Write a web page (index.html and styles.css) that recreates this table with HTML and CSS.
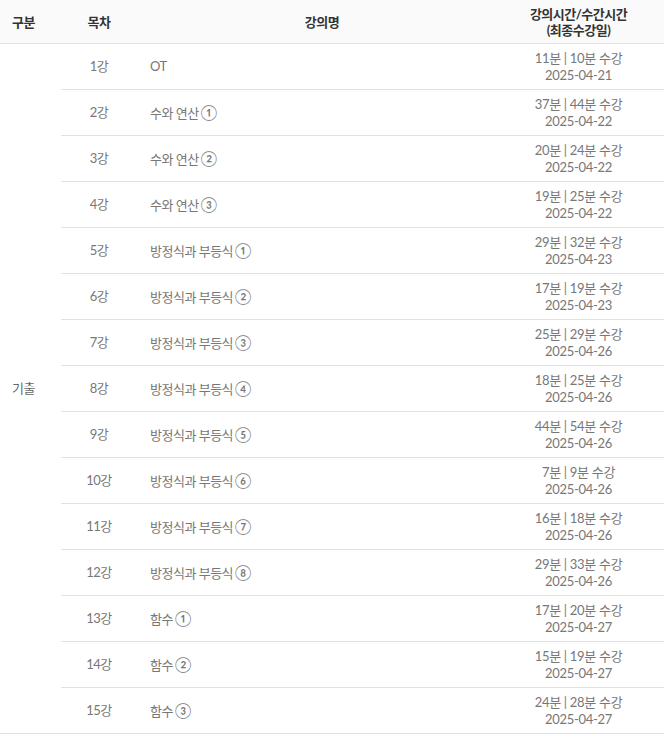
FILE: index.html
```html
<!DOCTYPE html>
<html lang="ko">
<head>
<meta charset="utf-8">
<title>강의 목차</title>
<link rel="stylesheet" href="styles.css">
</head>
<body>
<table class="lecture-table">
  <colgroup>
    <col class="c-cat">
    <col class="c-no">
    <col class="c-title">
    <col class="c-time">
  </colgroup>
  <thead>
    <tr>
      <th class="cat">구분</th>
      <th>목차</th>
      <th>강의명</th>
      <th class="time">강의시간/수간시간<br>(최종수강일)</th>
    </tr>
  </thead>
  <tbody>
    <tr><td class="cat" rowspan="15">기출</td><td class="no">1강</td><td class="title">OT</td><td class="time">11분 | 10분 수강<br>2025-04-21</td></tr>
    <tr><td class="no">2강</td><td class="title">수와 연산<span class="circ">①</span></td><td class="time">37분 | 44분 수강<br>2025-04-22</td></tr>
    <tr><td class="no">3강</td><td class="title">수와 연산<span class="circ">②</span></td><td class="time">20분 | 24분 수강<br>2025-04-22</td></tr>
    <tr><td class="no">4강</td><td class="title">수와 연산<span class="circ">③</span></td><td class="time">19분 | 25분 수강<br>2025-04-22</td></tr>
    <tr><td class="no">5강</td><td class="title">방정식과 부등식<span class="circ">①</span></td><td class="time">29분 | 32분 수강<br>2025-04-23</td></tr>
    <tr><td class="no">6강</td><td class="title">방정식과 부등식<span class="circ">②</span></td><td class="time">17분 | 19분 수강<br>2025-04-23</td></tr>
    <tr><td class="no">7강</td><td class="title">방정식과 부등식<span class="circ">③</span></td><td class="time">25분 | 29분 수강<br>2025-04-26</td></tr>
    <tr><td class="no">8강</td><td class="title">방정식과 부등식<span class="circ">④</span></td><td class="time">18분 | 25분 수강<br>2025-04-26</td></tr>
    <tr><td class="no">9강</td><td class="title">방정식과 부등식<span class="circ">⑤</span></td><td class="time">44분 | 54분 수강<br>2025-04-26</td></tr>
    <tr><td class="no">10강</td><td class="title">방정식과 부등식<span class="circ">⑥</span></td><td class="time">7분 | 9분 수강<br>2025-04-26</td></tr>
    <tr><td class="no">11강</td><td class="title">방정식과 부등식<span class="circ">⑦</span></td><td class="time">16분 | 18분 수강<br>2025-04-26</td></tr>
    <tr><td class="no">12강</td><td class="title">방정식과 부등식<span class="circ">⑧</span></td><td class="time">29분 | 33분 수강<br>2025-04-26</td></tr>
    <tr><td class="no">13강</td><td class="title">함수<span class="circ">①</span></td><td class="time">17분 | 20분 수강<br>2025-04-27</td></tr>
    <tr><td class="no">14강</td><td class="title">함수<span class="circ">②</span></td><td class="time">15분 | 19분 수강<br>2025-04-27</td></tr>
    <tr><td class="no">15강</td><td class="title">함수<span class="circ">③</span></td><td class="time">24분 | 28분 수강<br>2025-04-27</td></tr>
  </tbody>
</table>
</body>
</html>
```
FILE: styles.css
```css
html, body {
  margin: 0;
  padding: 0;
  background: #fff;
}
body {
  font-family: "Lato", "Noto Sans CJK KR", sans-serif;
  font-size: 13px;
  color: #777;
}
.lecture-table {
  width: 664px;
  border-collapse: collapse;
  table-layout: fixed;
}
.c-cat { width: 61px; }
.c-no { width: 76px; }
.c-title { width: 370px; }
.c-time { width: 157px; }

.lecture-table th {
  height: 43px;
  padding: 0;
  background: #fafafa;
  color: #333;
  font-weight: 700;
  font-size: 13px;
  line-height: 16px;
  text-align: center;
  border-bottom: 1px solid #e2e2e2;
  letter-spacing: -0.5px;
}
.lecture-table th.cat {
  text-align: left;
  padding-left: 12px;
}
.lecture-table th.time {
  padding-right: 14px;
}
.lecture-table td {
  height: 45px;
  padding: 0;
  line-height: 17px;
  border-bottom: 1px solid #e2e2e2;
  vertical-align: middle;
}
.lecture-table td.cat {
  text-align: left;
  padding-left: 12px;
  color: #666;
  letter-spacing: -0.5px;
}
.lecture-table td.no {
  text-align: center;
  letter-spacing: -0.5px;
}
.lecture-table td.title {
  padding-left: 13px;
  letter-spacing: -0.5px;
}
.circ {
  font-size: 15px;
  line-height: 17px;
  margin-left: 2px;
  letter-spacing: 0;
}
.lecture-table td.time {
  text-align: center;
  padding-right: 14px;
  letter-spacing: -0.3px;
}
```
